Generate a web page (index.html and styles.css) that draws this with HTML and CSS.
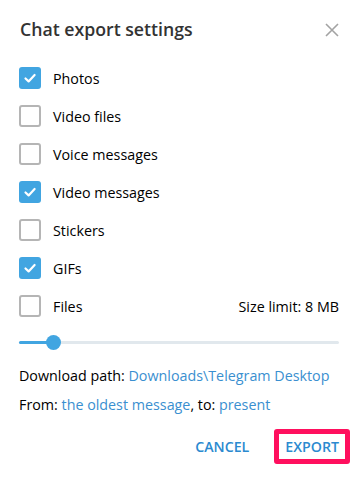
FILE: index.html
```html
<!DOCTYPE html>
<html>
<head>
<meta charset="utf-8">
<link rel="stylesheet" href="styles.css">
</head>
<body>
<div class="dialog">
  <div class="header">
    <div class="title">Chat export settings</div>
    <svg class="close" width="14" height="14" viewBox="0 0 14 14"><path d="M1 1L13 13M13 1L1 13" stroke="#a3a3a3" stroke-width="1.6" fill="none"/></svg>
  </div>
  <div class="options">
    <div class="row"><span class="cb on"><svg width="22" height="22" viewBox="0 0 22 22"><path d="M6.5 11.5L9.6 14.4L15.6 8" stroke="#fff" stroke-width="2.2" fill="none" stroke-linecap="round" stroke-linejoin="round"/></svg></span><span class="label">Photos</span></div>
    <div class="row"><span class="cb"></span><span class="label">Video files</span></div>
    <div class="row"><span class="cb"></span><span class="label">Voice messages</span></div>
    <div class="row"><span class="cb on"><svg width="22" height="22" viewBox="0 0 22 22"><path d="M6.5 11.5L9.6 14.4L15.6 8" stroke="#fff" stroke-width="2.2" fill="none" stroke-linecap="round" stroke-linejoin="round"/></svg></span><span class="label">Video messages</span></div>
    <div class="row"><span class="cb"></span><span class="label">Stickers</span></div>
    <div class="row"><span class="cb on"><svg width="22" height="22" viewBox="0 0 22 22"><path d="M6.5 11.5L9.6 14.4L15.6 8" stroke="#fff" stroke-width="2.2" fill="none" stroke-linecap="round" stroke-linejoin="round"/></svg></span><span class="label">GIFs</span></div>
    <div class="row"><span class="cb"></span><span class="label">Files</span><span class="limit">Size limit: 8 MB</span></div>
  </div>
  <div class="slider">
    <div class="track"><div class="fill"></div><div class="knob"></div></div>
  </div>
  <div class="info">
    <div class="line">Download path: <span class="link">Downloads\Telegram Desktop</span></div>
    <div class="line">From: <span class="link">the oldest message</span>, to: <span class="link">present</span></div>
  </div>
  <div class="buttons">
    <span class="btn">CANCEL</span>
    <span class="btn export">EXPORT</span>
  </div>
</div>
</body>
</html>
```
FILE: styles.css
```css
html, body {
  margin: 0;
  padding: 0;
  background: #fff;
}
.dialog {
  width: 361px;
  height: 478px;
  box-sizing: border-box;
  font-family: "Open Sans", "DejaVu Sans", sans-serif;
  color: #000;
  position: relative;
}
.header {
  display: flex;
  justify-content: space-between;
  align-items: center;
  padding: 15px 22px 0 20px;
  height: 28px;
}
.title {
  font-size: 17.7px;
  font-weight: 600;
  color: #333;
}
.close {
  display: block;
  margin-top: 1px;
}
.options {
  padding: 16px 0 0 19px;
}
.row {
  display: flex;
  align-items: center;
  height: 38px;
  padding-right: 22px;
}
.cb {
  width: 22px;
  height: 22px;
  box-sizing: border-box;
  border: 2px solid #b5b5b5;
  border-radius: 3px;
  flex: none;
  position: relative;
}
.cb.on {
  background: #41a5e1;
  border: none;
}
.cb svg {
  display: block;
}
.label {
  margin-left: 12px;
  font-size: 14.3px;
}
.limit {
  margin-left: auto;
  font-size: 14.3px;
}
.slider {
  padding: 16px 22px 0 19px;
}
.track {
  position: relative;
  height: 3px;
  background: #e1e8ed;
  border-radius: 2px;
}
.fill {
  width: 34px;
  height: 3px;
  background: #41a5e1;
  border-radius: 2px;
}
.knob {
  position: absolute;
  left: 27px;
  top: -6px;
  width: 15px;
  height: 15px;
  border-radius: 50%;
  background: #41a5e1;
}
.info {
  padding: 22px 0 0 19px;
}
.line {
  font-size: 14.3px;
  height: 29px;
  line-height: 20px;
}
.link {
  color: #3a8fd0;
}
.buttons {
  display: flex;
  justify-content: flex-end;
  align-items: center;
  padding: 5px 11px 0 0;
}
.btn {
  font-size: 14.2px;
  font-weight: 600;
  color: #2b8ad0;
  padding: 0 13px;
  line-height: 25px;
}
.export {
  border: 5px solid #ff0f5e;
  border-radius: 3px;
  margin-left: 12px;
  padding: 0 6px;
}
```
